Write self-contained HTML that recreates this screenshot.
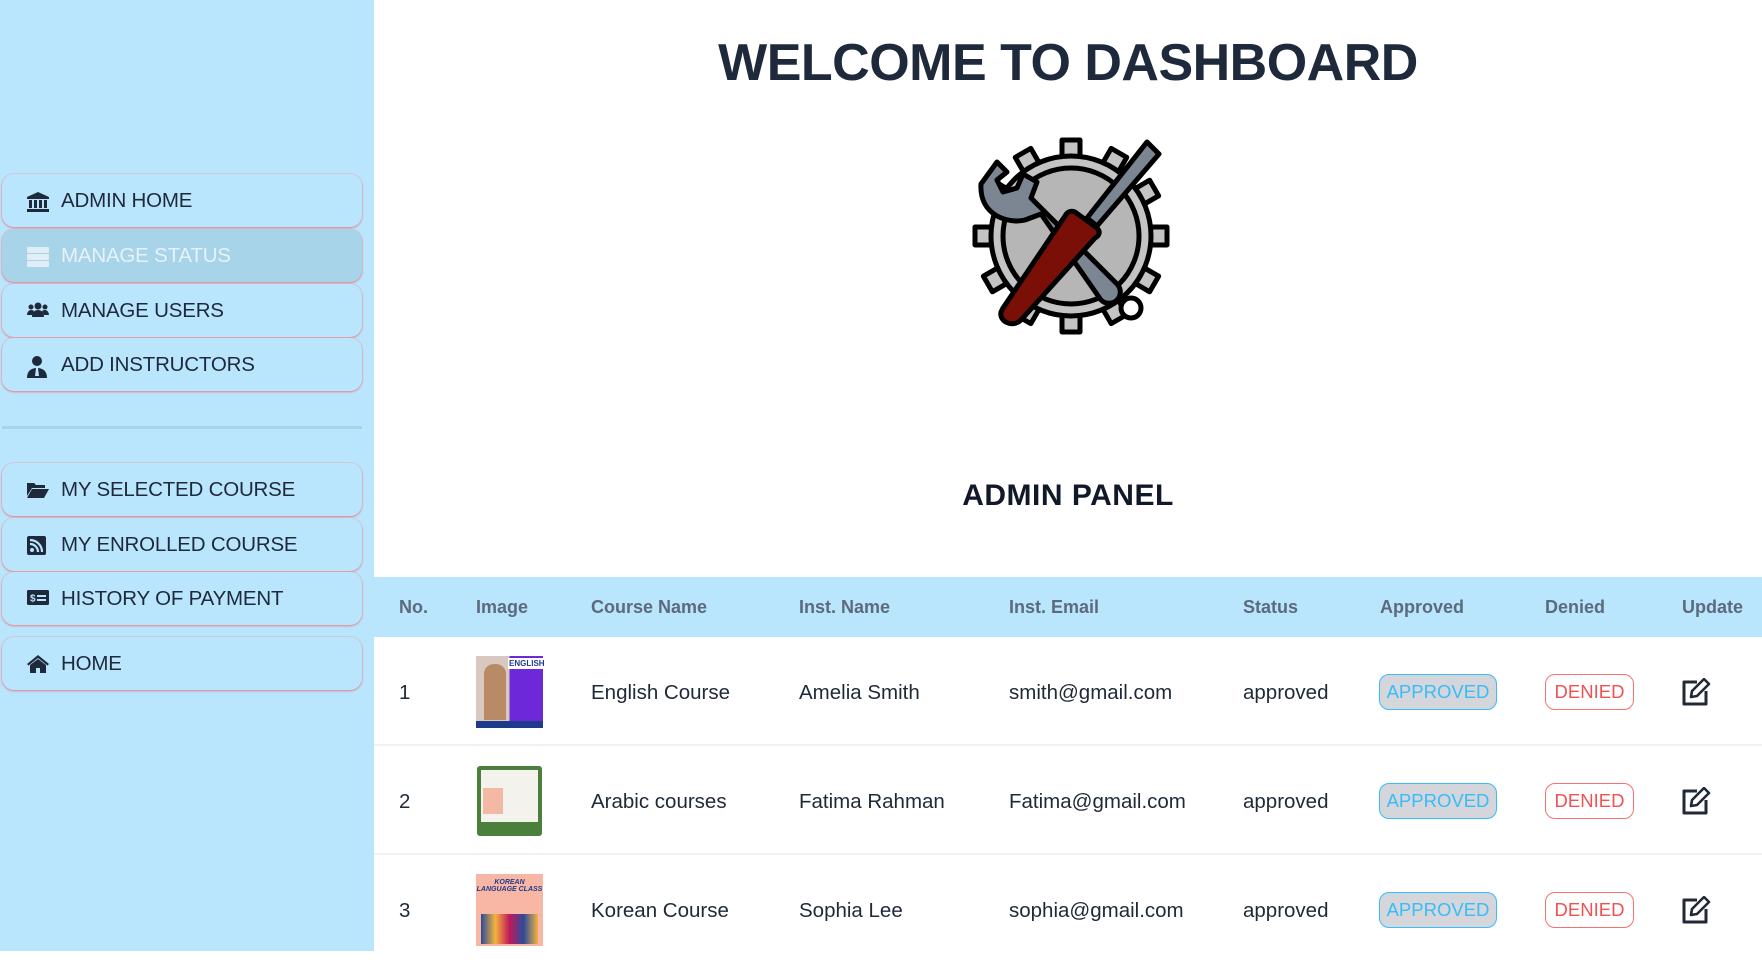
<!DOCTYPE html>
<html><head><meta charset="utf-8"><style>
*{box-sizing:border-box;margin:0;padding:0}
body{width:1762px;height:951px;overflow:hidden;font-family:"Segoe UI","Liberation Sans",sans-serif;background:#fff;color:#1f2937;position:relative}
.side{position:absolute;left:0;top:0;width:374px;height:951px;background:#bae6fd}
.btn{position:absolute;left:2px;width:360px;height:53px;border-radius:12px;background:#bae6fd;box-shadow:0 1px 2px rgba(230,120,130,.9),0 0 0 1px rgba(240,170,180,.35);display:flex;align-items:center;font-size:20.5px;letter-spacing:-0.2px;color:#1e293b}
.btn svg{position:absolute;left:25px;top:18px}
.btn span{position:absolute;left:59px;top:15px}
.btn.act{background:#a8d4ea;color:#e6f1f8}
.div{position:absolute;left:2px;top:426px;width:360px;height:3px;background:#a9d3ea}
h1{position:absolute;left:374px;width:1388px;top:33px;text-align:center;font-size:52px;font-weight:700;color:#1e293b;letter-spacing:-0.5px}
h2{position:absolute;left:374px;width:1388px;top:479px;text-align:center;font-size:30px;font-weight:700;color:#111827;letter-spacing:0.5px}
.th{position:absolute;left:374px;top:577px;width:1388px;height:60px;background:#bae6fd}
.t{position:absolute;font-size:18px;font-weight:700;color:#5b6b7d;top:597px}
.row{position:absolute;left:374px;width:1388px;height:109px;border-bottom:2px solid #f0f1f3}
.c{position:absolute;font-size:20.5px;color:#1f2937}
.ap{position:absolute;left:1379px;width:118px;height:36px;border:1.5px solid #38bdf8;border-radius:10px;background:#d4d6db;color:#38bdf8;font-size:18.5px;text-align:center;line-height:33px}
.dn{position:absolute;left:1545px;width:89px;height:36px;border:1.5px solid #f87171;border-radius:10px;background:#fff;color:#f05252;font-size:18.5px;text-align:center;line-height:33px}
</style></head><body>
<div class="side">
<div class="btn" style="top:174px"><svg width="22" height="20" viewBox="0 0 22 20"><path d="M11 0L0 5v2h22V5z M2 8h3v8H2z M7 8h3v8H7z M12 8h3v8h-3z M17 8h3v8h-3z M0 17h22v3H0z" fill="#1e293b"/></svg><span>ADMIN HOME</span></div>
<div class="btn act" style="top:229px"><svg width="22" height="20" viewBox="0 0 22 20"><rect y="0" width="22" height="6" rx="1" fill="#e1eef6"/><rect y="7" width="22" height="6" rx="1" fill="#e1eef6"/><rect y="14" width="22" height="6" rx="1" fill="#e1eef6"/></svg><span>MANAGE STATUS</span></div>
<div class="btn" style="top:284px"><svg width="22" height="16" viewBox="0 0 22 16"><circle cx="11" cy="4" r="3.5" fill="#1e293b"/><circle cx="4" cy="5" r="2.5" fill="#1e293b"/><circle cx="18" cy="5" r="2.5" fill="#1e293b"/><path d="M5 15c0-5 3-7 6-7s6 2 6 7z M0 13c0-3 2-5 4-5s3 1 3 1l-2 4z M22 13c0-3-2-5-4-5s-3 1-3 1l2 4z" fill="#1e293b"/></svg><span>MANAGE USERS</span></div>
<div class="btn" style="top:338px"><svg width="20" height="22" viewBox="0 0 20 22"><circle cx="10" cy="5" r="5" fill="#1e293b"/><path d="M0 22c0-7 4-10 10-10s10 3 10 10z" fill="#1e293b"/><path d="M9 12h2l1 8h-4z" fill="#bae6fd"/></svg><span>ADD INSTRUCTORS</span></div>
<div class="div"></div>
<div class="btn" style="top:463px"><svg width="22" height="17" viewBox="0 0 22 17"><path d="M0 2h7l2 2h9v3H5L0 15z M5 8h17l-5 9H0z" fill="#1e293b"/></svg><span>MY SELECTED COURSE</span></div>
<div class="btn" style="top:518px"><svg width="19" height="19" viewBox="0 0 19 19"><rect width="19" height="19" rx="2" fill="#1e293b"/><circle cx="5" cy="14" r="2" fill="#bae6fd"/><path d="M3 8a8 8 0 0 1 8 8M3 4a12 12 0 0 1 12 12" stroke="#bae6fd" stroke-width="2.2" fill="none"/></svg><span>MY ENROLLED COURSE</span></div>
<div class="btn" style="top:572px"><svg width="22" height="15" viewBox="0 0 22 15"><rect width="22" height="15" rx="1.5" fill="#1e293b"/><text x="3" y="11.5" font-size="10" fill="#bae6fd" font-family="Liberation Sans" font-weight="700">$</text><rect x="10" y="5" width="9" height="2" fill="#bae6fd"/><rect x="10" y="9" width="9" height="2" fill="#bae6fd"/></svg><span>HISTORY OF PAYMENT</span></div>
<div class="btn" style="top:637px"><svg width="22" height="18" viewBox="0 0 22 18"><path d="M11 0L0 9l1.5 1.5L11 3l9.5 7.5L22 9z M3 10l8-6 8 6v8h-6v-5H9v5H3z" fill="#1e293b"/></svg><span>HOME</span></div>
</div>
<h1>WELCOME TO DASHBOARD</h1>
<svg style="position:absolute;left:971px;top:136px" width="200" height="200" viewBox="0 0 200 200">
<g stroke="#000" stroke-width="5" stroke-linejoin="round">
<g fill="#c4c4c4" transform="translate(100,100)">
<rect x="-9" y="-96" width="18" height="30"/>
<rect x="-9" y="-96" width="18" height="30" transform="rotate(30)"/>
<rect x="-9" y="-96" width="18" height="30" transform="rotate(60)"/>
<rect x="-9" y="-96" width="18" height="30" transform="rotate(90)"/>
<rect x="-9" y="-96" width="18" height="30" transform="rotate(120)"/>
<rect x="-9" y="-96" width="18" height="30" transform="rotate(150)"/>
<rect x="-9" y="-96" width="18" height="30" transform="rotate(180)"/>
<rect x="-9" y="-96" width="18" height="30" transform="rotate(210)"/>
<rect x="-9" y="-96" width="18" height="30" transform="rotate(240)"/>
<rect x="-9" y="-96" width="18" height="30" transform="rotate(270)"/>
<rect x="-9" y="-96" width="18" height="30" transform="rotate(300)"/>
<rect x="-9" y="-96" width="18" height="30" transform="rotate(330)"/>
<circle r="80"/>
</g>
<circle cx="100" cy="100" r="68" fill="#b6b6b6"/>
<path d="M10 48l16-22 10 10-10 8 6 12 14-4 6-14 14 8-6 16 86 86a11 11 0 0 1-16 16L70 78l-16 6c-16 4-46-4-44-36z" fill="#7c8592"/>
<path d="M176 6l12 12-62 72-10-8z" fill="#7c8592"/>
<path d="M104 76l22 16c4 4 2 8-2 10L50 184c-8 8-22 2-20-8l2-4 62-92c2-4 6-6 10-4z" fill="#7a0f08"/>
<circle cx="160" cy="172" r="10" fill="#fff"/>
</g></svg>
<h2>ADMIN PANEL</h2>
<div class="th"></div>
<div class="t" style="left:399px">No.</div>
<div class="t" style="left:476px">Image</div>
<div class="t" style="left:591px">Course Name</div>
<div class="t" style="left:799px">Inst. Name</div>
<div class="t" style="left:1009px">Inst. Email</div>
<div class="t" style="left:1243px">Status</div>
<div class="t" style="left:1380px">Approved</div>
<div class="t" style="left:1545px">Denied</div>
<div class="t" style="left:1682px">Update</div>

<div class="row" style="top:637px"></div>
<div class="row" style="top:746px"></div>
<div class="row" style="top:855px;border:none"></div>

<div style="position:absolute;left:476px;top:656px;width:67px;height:72px;background:linear-gradient(90deg,#d9c8c0 0 50%,#6d28d9 50%);"><div style="position:absolute;left:0;bottom:0;width:67px;height:7px;background:#1e3a8a"></div><div style="position:absolute;left:8px;top:8px;width:22px;height:56px;background:#b88a66;border-radius:10px 10px 0 0"></div><div style="position:absolute;left:32px;top:2px;font:700 8px 'Liberation Sans';color:#1e3a8a;background:#fff;padding:1px">ENGLISH</div></div>
<div style="position:absolute;left:477px;top:766px;width:65px;height:70px;background:#4a7f3c;border-radius:3px"><div style="position:absolute;left:4px;top:4px;width:57px;height:52px;background:#f3f2ec"></div><div style="position:absolute;left:6px;top:22px;width:20px;height:26px;background:#f4b9a5"></div></div>
<div style="position:absolute;left:476px;top:874px;width:67px;height:72px;background:#f8b7a5"><div style="position:absolute;left:5px;top:40px;width:57px;height:30px;background:linear-gradient(90deg,#2b4b9a,#f3b33d,#c2185b,#2b4b9a,#f3b33d)"></div><div style="position:absolute;left:0;top:5px;width:67px;text-align:center;font:italic 700 7px 'Liberation Sans';color:#1e3a8a">KOREAN LANGUAGE CLASS</div></div>

<div class="c" style="left:399px;top:681px">1</div>
<div class="c" style="left:591px;top:681px">English Course</div>
<div class="c" style="left:799px;top:681px">Amelia Smith</div>
<div class="c" style="left:1009px;top:681px">smith@gmail.com</div>
<div class="c" style="left:1243px;top:681px">approved</div>
<div class="ap" style="top:674px">APPROVED</div><div class="dn" style="top:674px">DENIED</div>

<div class="c" style="left:399px;top:790px">2</div>
<div class="c" style="left:591px;top:790px">Arabic courses</div>
<div class="c" style="left:799px;top:790px">Fatima Rahman</div>
<div class="c" style="left:1009px;top:790px">Fatima@gmail.com</div>
<div class="c" style="left:1243px;top:790px">approved</div>
<div class="ap" style="top:783px">APPROVED</div><div class="dn" style="top:783px">DENIED</div>

<div class="c" style="left:399px;top:899px">3</div>
<div class="c" style="left:591px;top:899px">Korean Course</div>
<div class="c" style="left:799px;top:899px">Sophia Lee</div>
<div class="c" style="left:1009px;top:899px">sophia@gmail.com</div>
<div class="c" style="left:1243px;top:899px">approved</div>
<div class="ap" style="top:892px">APPROVED</div><div class="dn" style="top:892px">DENIED</div>

<svg style="position:absolute;left:1681px;top:678px" width="30" height="28" viewBox="0 0 30 28"><path d="M16 4H3v22h22V13" fill="none" stroke="#1f2937" stroke-width="3" stroke-linejoin="round"/><path d="M10 19l1-6L23 1l5 5-12 12z" fill="none" stroke="#1f2937" stroke-width="2.6" stroke-linejoin="round"/></svg>
<svg style="position:absolute;left:1681px;top:787px" width="30" height="28" viewBox="0 0 30 28"><path d="M16 4H3v22h22V13" fill="none" stroke="#1f2937" stroke-width="3" stroke-linejoin="round"/><path d="M10 19l1-6L23 1l5 5-12 12z" fill="none" stroke="#1f2937" stroke-width="2.6" stroke-linejoin="round"/></svg>
<svg style="position:absolute;left:1681px;top:896px" width="30" height="28" viewBox="0 0 30 28"><path d="M16 4H3v22h22V13" fill="none" stroke="#1f2937" stroke-width="3" stroke-linejoin="round"/><path d="M10 19l1-6L23 1l5 5-12 12z" fill="none" stroke="#1f2937" stroke-width="2.6" stroke-linejoin="round"/></svg>
</body></html>
